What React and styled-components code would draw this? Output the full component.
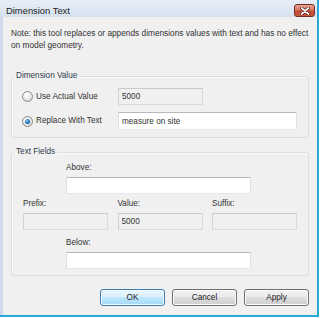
import React from 'react'
import styled, { createGlobalStyle } from 'styled-components'

const App = () => {
  return (
    <>
      <GlobalStyle />
      <WindowStyled>
        <TitleBarStyled>
          <TitleStyled>Dimension Text</TitleStyled>
          <CloseButtonStyled>
            <svg width='10' height='8' viewBox='0 0 10 8'>
              <path d='M1.5 1 L8.5 7 M8.5 1 L1.5 7' stroke='#4e1a12' strokeWidth='3.2' strokeLinecap='round' />
              <path d='M1.5 1 L8.5 7 M8.5 1 L1.5 7' stroke='#ffffff' strokeWidth='1.7' strokeLinecap='round' />
            </svg>
          </CloseButtonStyled>
        </TitleBarStyled>
        <ClientStyled>
          <NoteStyled>
            Note: this tool replaces or appends dimensions values with text and has no effect on model geometry.
          </NoteStyled>

          <GroupStyled $top={19}>
            <LegendStyled>Dimension Value</LegendStyled>
            <GroupBodyStyled $pad='6px 10px 7px 10px'>
              <RadioRowStyled>
                <RadioLabelStyled>
                  <RadioDotStyled />
                  Use Actual Value
                </RadioLabelStyled>
                <BoxStyled $disabled $w={85} readOnly value='5000' />
              </RadioRowStyled>
              <RadioRowStyled>
                <RadioLabelStyled>
                  <RadioDotStyled $checked />
                  Replace With Text
                </RadioLabelStyled>
                <BoxStyled $w={179} $h={18} readOnly value='measure on site' />
              </RadioRowStyled>
            </GroupBodyStyled>
          </GroupStyled>

          <GroupStyled $top={8}>
            <LegendStyled>Text Fields</LegendStyled>
            <GroupBodyStyled $pad='4px 11px 6px 11px'>
              <FieldStyled $indent={43}>
                <FieldLabelStyled>Above:</FieldLabelStyled>
                <BoxStyled $w={185} readOnly value='' />
              </FieldStyled>
              <FieldGridStyled>
                <FieldStyled>
                  <FieldLabelStyled>Prefix:</FieldLabelStyled>
                  <BoxStyled $disabled $w={85} readOnly value='' />
                </FieldStyled>
                <FieldStyled>
                  <FieldLabelStyled>Value:</FieldLabelStyled>
                  <BoxStyled $disabled $w={85} readOnly value='5000' />
                </FieldStyled>
                <FieldStyled>
                  <FieldLabelStyled>Suffix:</FieldLabelStyled>
                  <BoxStyled $disabled $w={85} readOnly value='' />
                </FieldStyled>
              </FieldGridStyled>
              <FieldStyled $indent={43} $top={7}>
                <FieldLabelStyled>Below:</FieldLabelStyled>
                <BoxStyled $w={185} readOnly value='' />
              </FieldStyled>
            </GroupBodyStyled>
          </GroupStyled>

          <ButtonRowStyled>
            <ButtonStyled $primary>OK</ButtonStyled>
            <ButtonStyled>Cancel</ButtonStyled>
            <ButtonStyled>Apply</ButtonStyled>
          </ButtonRowStyled>
        </ClientStyled>
      </WindowStyled>
    </>
  )
}

export default App

// STYLING
const GlobalStyle = createGlobalStyle`
  html, body {
    margin: 0;
    padding: 0;
    background: #ffffff;
  }
  body {
    font-family: "Liberation Sans", Arial, sans-serif;
    font-size: 8.2px;
    color: #333333;
  }
`

const WindowStyled = styled.div`
  width: 317px;
  height: 315px;
  display: flex;
  flex-direction: column;
  background: #cfdbea;
  border-right: 2px solid #25abd6;
  border-bottom: 2px solid #25abd6;
`

const TitleBarStyled = styled.div`
  height: 17px;
  flex-shrink: 0;
  display: flex;
  align-items: flex-start;
  justify-content: space-between;
  background: linear-gradient(#e8eef6, #d6e1ee);
`

const TitleStyled = styled.span`
  margin: 4px 0 0 6px;
  font-size: 9.4px;
  line-height: 13px;
  color: #1b1b1b;
`

const CloseButtonStyled = styled.div`
  width: 19px;
  height: 11px;
  margin: 4px 2px 0 0;
  display: flex;
  align-items: center;
  justify-content: center;
  border: 1px solid #7a2c22;
  border-radius: 3px;
  background: linear-gradient(#e6a592 0%, #d77a63 45%, #c24a33 55%, #c9583e 100%);
`

const ClientStyled = styled.div`
  flex: 1;
  margin-left: 3px;
  padding: 10px 8px 0 8px;
  display: flex;
  flex-direction: column;
  background: #f0f0f0;
`

const NoteStyled = styled.p`
  margin: 0;
  line-height: 12px;
  font-size: 8.3px;
  color: #333333;
`

const GroupStyled = styled.fieldset`
  margin: ${(p) => p.$top}px 0 0 0;
  padding: 0;
  min-width: 0;
  border: 1px solid #d5dfe5;
  border-radius: 3px;
  box-shadow: inset 1px 1px 0 #fafafa;
`

const LegendStyled = styled.legend`
  margin-left: 2px;
  padding: 0 2px;
  line-height: 12px;
  color: #2d3b4b;
`

const GroupBodyStyled = styled.div`
  padding: ${(p) => p.$pad};
  display: flex;
  flex-direction: column;
`

const RadioRowStyled = styled.div`
  display: grid;
  grid-template-columns: 96px auto;
  align-items: center;
  & + & {
    margin-top: 7px;
  }
`

const RadioLabelStyled = styled.label`
  display: flex;
  align-items: center;
  gap: 3px;
  line-height: 12px;
  color: #333333;
`

const RadioDotStyled = styled.span`
  position: relative;
  width: 9px;
  height: 9px;
  border-radius: 50%;
  border: 1px solid #8a8a8a;
  background: radial-gradient(circle at 40% 35%, #ffffff 0%, #e6e6e6 55%, #cfcfcf 100%);
  flex-shrink: 0;
  &::after {
    content: '';
    display: ${(p) => (p.$checked ? 'block' : 'none')};
    position: absolute;
    left: 2px;
    top: 2px;
    width: 5px;
    height: 5px;
    border-radius: 50%;
    background: radial-gradient(circle at 40% 35%, #8fd3f7 0%, #1f6fb8 55%, #0f3a6e 100%);
  }
`

const BoxStyled = styled.input`
  box-sizing: border-box;
  width: ${(p) => p.$w}px;
  height: ${(p) => p.$h || 17}px;
  margin: 0;
  padding: 0 3px;
  font-family: "Liberation Sans", Arial, sans-serif;
  font-size: 8.2px;
  color: #333333;
  outline: none;
  border: 1px solid;
  border-radius: 1px;
  border-color: ${(p) => (p.$disabled ? '#c9c9c9 #dadada #dadada #d2d2d2' : '#b6b9c0 #dde1e6 #e3e7ec #dde0e6')};
  background: ${(p) => (p.$disabled ? '#f0f0f0' : '#ffffff')};
`

const FieldStyled = styled.div`
  display: flex;
  flex-direction: column;
  gap: 3px;
  margin-left: ${(p) => p.$indent || 0}px;
  margin-top: ${(p) => p.$top || 0}px;
`

const FieldLabelStyled = styled.span`
  line-height: 12px;
  color: #333333;
`

const FieldGridStyled = styled.div`
  display: grid;
  grid-template-columns: 85px 85px 85px;
  column-gap: 9.5px;
  margin-top: 4px;
`

const ButtonRowStyled = styled.div`
  display: flex;
  justify-content: flex-end;
  gap: 7px;
  margin-top: 13px;
`

const ButtonStyled = styled.button`
  box-sizing: border-box;
  width: 65px;
  height: 17px;
  padding: 0;
  font-family: "Liberation Sans", Arial, sans-serif;
  font-size: 8.2px;
  color: #222222;
  border-radius: 3px;
  border: 1px solid ${(p) => (p.$primary ? '#3c7fb1' : '#707070')};
  box-shadow: inset 0 0 0 1px ${(p) => (p.$primary ? '#f2faff' : '#fbfbfb')};
  background: ${(p) =>
    p.$primary
      ? 'linear-gradient(#eaf6fd 0%, #d9f0fc 50%, #bee6fd 50%, #a7d9f5 100%)'
      : 'linear-gradient(#f2f2f2 0%, #ebebeb 50%, #dddddd 50%, #cfcfcf 100%)'};
`
